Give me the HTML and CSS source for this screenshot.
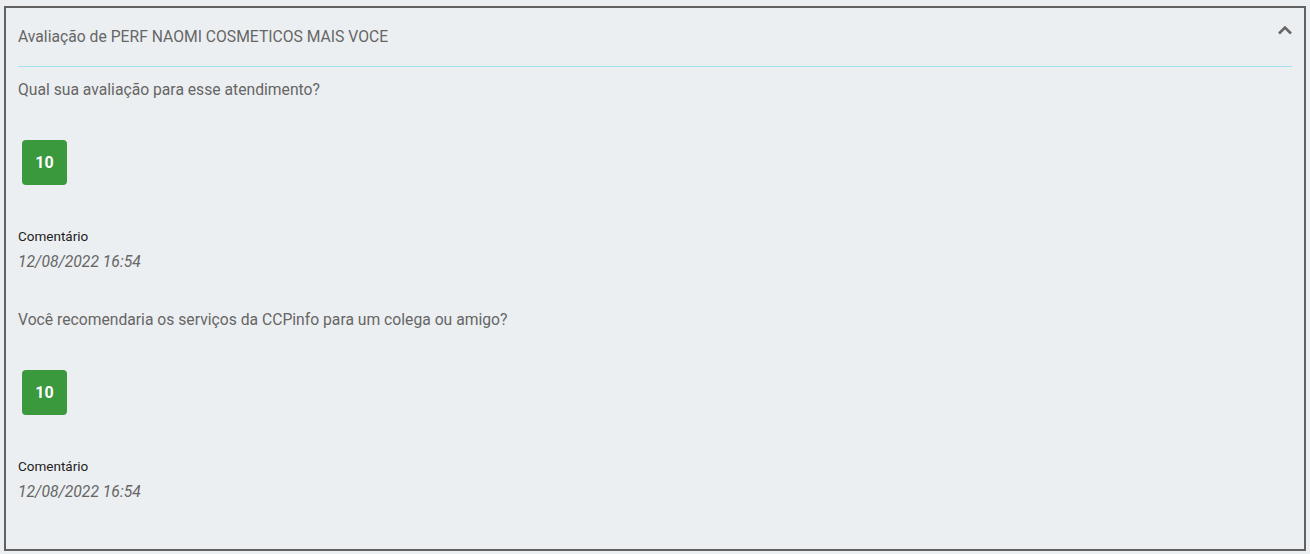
FILE: index.html
```html
<!DOCTYPE html>
<html lang="pt-BR">
<head>
  <meta charset="UTF-8">
  <title>Avaliação</title>
  <link rel="stylesheet" href="styles.css">
</head>
<body>
  <div class="panel">
    <div class="panel-header">
      <span class="panel-title">Avaliação de PERF NAOMI COSMETICOS MAIS VOCE</span>
      <svg class="chevron" width="16" height="10" viewBox="0 0 16 10">
        <polyline points="2,8.5 8,2.5 14,8.5" fill="none" stroke="#666" stroke-width="2.6"/>
      </svg>
    </div>

    <div class="question">
      <div class="question-text">Qual sua avaliação para esse atendimento?</div>
      <div class="score">10</div>
      <div class="comment-label">Comentário</div>
      <div class="comment-date">12/08/2022 16:54</div>
    </div>

    <div class="question">
      <div class="question-text">Você recomendaria os serviços da CCPinfo para um colega ou amigo?</div>
      <div class="score">10</div>
      <div class="comment-label">Comentário</div>
      <div class="comment-date">12/08/2022 16:54</div>
    </div>
  </div>
</body>
</html>
```

FILE: styles.css
```css
body {
  margin: 0;
  padding: 6px 4px 3px 4px;
  background-color: #eceff1;
  font-family: Roboto, Arial, sans-serif;
  color: #666;
}

.panel {
  border: 2px solid #616161;
  background-color: #eceff1;
  padding: 0 12px;
  height: 541px;
}

.panel-header {
  display: flex;
  align-items: center;
  justify-content: space-between;
  height: 58px;
  border-bottom: 1px solid #a6e1ee;
}

.panel-title {
  font-size: 15.7px;
  line-height: 20px;
}

.chevron {
  margin-top: -15px;
  margin-right: -1px;
}

.question {
  padding-top: 13px;
}

.question + .question {
  padding-top: 38px;
}

.question-text {
  font-size: 15.7px;
  line-height: 20px;
}

.score {
  width: 45px;
  height: 45px;
  margin: 40px 0 0 4px;
  border-radius: 4px;
  background-color: #3a983d;
  color: white;
  font-weight: bold;
  font-size: 16px;
  display: flex;
  align-items: center;
  justify-content: center;
}

.comment-label {
  margin-top: 42px;
  font-size: 13.5px;
  line-height: 18px;
  color: #222;
}

.comment-date {
  margin-top: 7px;
  font-size: 15.7px;
  line-height: 20px;
  font-style: italic;
}
```
